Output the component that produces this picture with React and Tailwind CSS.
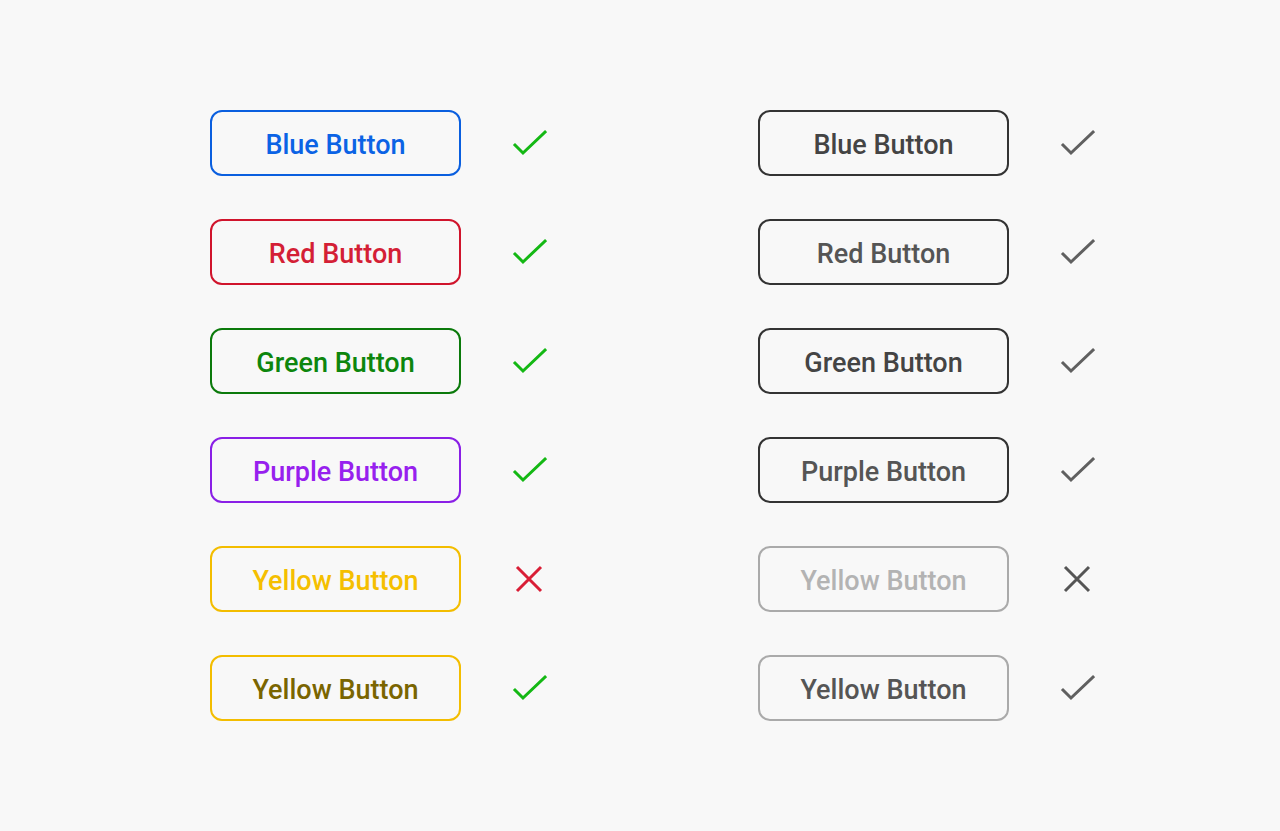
const left = [
  { label: 'Blue Button', cls: 'border-[#0a5fdf] text-[#0b63e5]', ok: true },
  { label: 'Red Button', cls: 'border-[#d0142c] text-[#d41f36]', ok: true },
  { label: 'Green Button', cls: 'border-[#0b7a0b] text-[#0d860d]', ok: true },
  { label: 'Purple Button', cls: 'border-[#8a1fe6] text-[#9720ee]', ok: true },
  { label: 'Yellow Button', cls: 'border-[#f3bd00] text-[#f5bf00]', ok: false },
  { label: 'Yellow Button', cls: 'border-[#f3bd00] text-[#7a6500]', ok: true },
]

const right = [
  { label: 'Blue Button', cls: 'border-[#333333] text-[#444444]', ok: true },
  { label: 'Red Button', cls: 'border-[#333333] text-[#555555]', ok: true },
  { label: 'Green Button', cls: 'border-[#333333] text-[#444444]', ok: true },
  { label: 'Purple Button', cls: 'border-[#333333] text-[#555555]', ok: true },
  { label: 'Yellow Button', cls: 'border-[#aaaaaa] text-[#b3b3b3]', ok: false },
  { label: 'Yellow Button', cls: 'border-[#aaaaaa] text-[#555555]', ok: true },
]

function Check({ color }) {
  return (
    <svg width="36" height="36" viewBox="0 0 36 36" fill="none">
      <path d="M4 20 L12 28 L34 7" stroke={color} strokeWidth="3" strokeLinecap="square" />
    </svg>
  )
}

function Cross({ color }) {
  return (
    <svg width="36" height="36" viewBox="0 0 36 36" fill="none">
      <path d="M6 6 L30 30 M30 6 L6 30" stroke={color} strokeWidth="3" />
    </svg>
  )
}

function Column({ items, check, cross }) {
  return (
    <div className="flex flex-col gap-[43px]">
      {items.map((b, i) => (
        <div key={i} className="flex items-center">
          <button className={`w-[251px] h-[66px] pt-[4px] rounded-[12px] border-2 bg-transparent text-[27px] font-medium leading-none ${b.cls}`}>
            {b.label}
          </button>
          <div className="ml-[50px]">
            {b.ok ? <Check color={check} /> : <Cross color={cross} />}
          </div>
        </div>
      ))}
    </div>
  )
}

export default function App() {
  return (
    <div className="min-h-[831px] bg-[#f8f8f8] pt-[110px] pl-[210px] flex gap-[211px]" style={{ fontFamily: 'Roboto, "Noto Sans", sans-serif' }}>
      <Column items={left} check="#14b814" cross="#d91e36" />
      <Column items={right} check="#606060" cross="#555555" />
    </div>
  )
}
